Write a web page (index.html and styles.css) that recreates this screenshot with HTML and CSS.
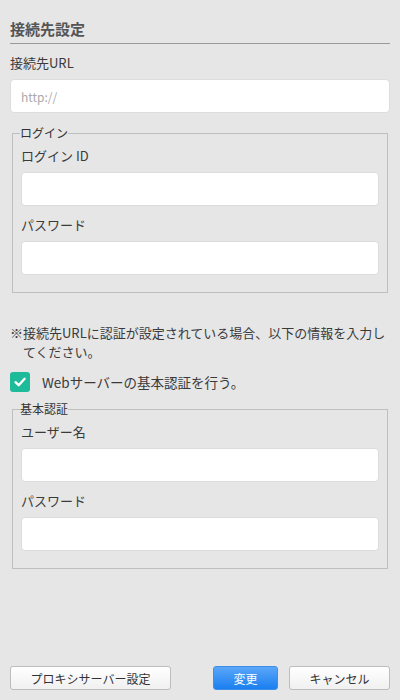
FILE: index.html
```html
<!DOCTYPE html>
<html lang="ja">
<head>
<meta charset="utf-8">
<link rel="stylesheet" href="styles.css">
</head>
<body>
<div class="page">
  <h1 class="title">接続先設定</h1>
  <div class="field top-field">
    <label class="label">接続先URL</label>
    <input class="input" type="text" placeholder="http://">
  </div>
  <fieldset class="group login">
    <legend class="legend">ログイン</legend>
    <div class="field">
      <label class="label">ログイン ID</label>
      <input class="input" type="text">
    </div>
    <div class="field next">
      <label class="label">パスワード</label>
      <input class="input" type="password">
    </div>
  </fieldset>
  <p class="note">※接続先URLに認証が設定されている場合、以下の情報を入力してください。</p>
  <label class="check-row">
    <span class="checkbox">
      <svg viewBox="0 0 20 20" width="20" height="20"><path d="M5.5 10.2 L8.7 13.2 L14.6 6.8" fill="none" stroke="#fff" stroke-width="2.4" stroke-linecap="round" stroke-linejoin="round"/></svg>
    </span>
    <span class="check-label">Webサーバーの基本認証を行う。</span>
  </label>
  <fieldset class="group basic">
    <legend class="legend">基本認証</legend>
    <div class="field">
      <label class="label">ユーザー名</label>
      <input class="input" type="text">
    </div>
    <div class="field next">
      <label class="label">パスワード</label>
      <input class="input" type="password">
    </div>
  </fieldset>
  <div class="footer">
    <button class="btn proxy">プロキシサーバー設定</button>
    <div class="right">
      <button class="btn primary">変更</button>
      <button class="btn cancel">キャンセル</button>
    </div>
  </div>
</div>
</body>
</html>
```
FILE: styles.css
```css
* { box-sizing: border-box; }
html, body { margin: 0; padding: 0; }
body {
  background: #e6e6e6;
  font-family: "Noto Sans CJK JP", "Noto Sans", sans-serif;
  color: #333;
}
.page {
  min-height: 700px;
  padding: 0 10px 10px 10px;
  display: flex;
  flex-direction: column;
}
.title {
  margin: 0;
  padding: 19px 0 4px 0;
  font-size: 15px;
  line-height: 20px;
  font-weight: bold;
  color: #555;
  border-bottom: 1px solid #999;
}
.field { display: flex; flex-direction: column; }
.top-field { margin-top: 10px; }
.label {
  font-size: 13px;
  line-height: 18px;
  margin-bottom: 7px;
  color: #3a3a3a;
}
.input {
  height: 34px;
  width: 100%;
  border: 1px solid #dcdcdc;
  border-radius: 4px;
  background: #fff;
  padding: 0 10px;
  font-family: inherit;
  font-size: 12px;
  outline: none;
}
.input::placeholder { color: #aaa; }
.group {
  margin: 0 2px;
  padding: 7px 8px 17px 8px;
  border: 1px solid #bfbfbf;
  min-width: 0;
}
.login { margin-top: 13px; }
.legend {
  padding: 0;
  margin-left: -1px;
  font-size: 12px;
  line-height: 14px;
  color: #333;
}
.next { margin-top: 10px; }
.note {
  margin: 30px 0 0 0;
  font-size: 13px;
  line-height: 19px;
  padding-left: 13px;
  text-indent: -13px;
  color: #3a3a3a;
}
.check-row {
  margin-top: 11px;
  display: flex;
  align-items: center;
  height: 20px;
}
.checkbox {
  width: 20px;
  height: 20px;
  border-radius: 3px;
  background: #1dbb9a;
  display: flex;
}
.check-label {
  margin-left: 12px;
  font-size: 13.5px;
  line-height: 20px;
  color: #3a3a3a;
}
.basic { margin-top: 10px; }
.footer {
  margin-top: auto;
  display: flex;
  justify-content: space-between;
  align-items: center;
}
.right { display: flex; gap: 11px; }
.btn {
  height: 24px;
  border: 1px solid #bdbdbd;
  border-radius: 3px;
  background: linear-gradient(#ffffff, #f0f0f0);
  font-family: inherit;
  font-size: 12px;
  color: #333;
  padding: 0;
}
.proxy { width: 161px; }
.primary {
  width: 65px;
  border-color: #3f8ee8;
  background: linear-gradient(#5aa6f8, #1a7ff0);
  color: #fff;
}
.cancel { width: 101px; }
```
